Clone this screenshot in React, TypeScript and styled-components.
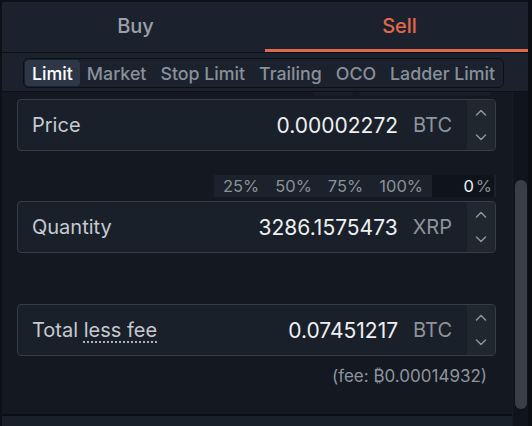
import React from "react";
import styled, { createGlobalStyle } from "styled-components";

const Global = createGlobalStyle`
  html, body { margin: 0; padding: 0; background: #131821; }
  body { font-family: Inter, "Noto Sans", "DejaVu Sans", sans-serif; }
  * { box-sizing: border-box; }
`;

const Panel = styled.div`
  width: 532px;
  height: 426px;
  display: flex;
  flex-direction: column;
  background: #131821;
  border-top: 2px solid #0d1117;
  border-left: 2px solid #0d1117;
  border-right: 4px solid #0b0e13;
  overflow: hidden;
`;

const Top = styled.div`
  background: #1b222d;
  border-bottom: 1px solid #0c1016;
`;

const SideTabs = styled.div`
  display: grid;
  grid-template-columns: 1fr 1fr;
  height: 51px;
  border-bottom: 1px solid #0c1016;
`;

const SideTab = styled.div<{ $active?: boolean }>`
  position: relative;
  display: flex;
  align-items: center;
  justify-content: center;
  padding-bottom: 3px;
  padding-left: ${(p) => (p.$active ? "6px" : "4px")};
  font-size: 20px;
  font-weight: 500;
  color: ${(p) => (p.$active ? "#e4674b" : "#9ba1a9")};
  &::after {
    content: "";
    display: ${(p) => (p.$active ? "block" : "none")};
    position: absolute;
    left: 0;
    right: 0;
    bottom: 0;
    height: 3px;
    background: #e0684b;
  }
`;

const TypeBar = styled.div`
  padding: 5px 0 3px 21px;
  height: 38px;
`;

const Segmented = styled.div`
  display: inline-flex;
  align-items: stretch;
  height: 30px;
  padding: 1px;
  border: 1px solid #0c1016;
  border-radius: 6px;
  background: #1b222d;
`;

const TypeItem = styled.div<{ $active?: boolean }>`
  display: flex;
  align-items: center;
  padding: 0 7px;
  border-radius: 4px;
  font-size: 17.8px;
  font-weight: 500;
  color: ${(p) => (p.$active ? "#ffffff" : "#899099")};
  background: ${(p) => (p.$active ? "#2e3747" : "transparent")};
`;

const Body = styled.div`
  flex: 1;
  display: flex;
  min-height: 0;
`;

const Content = styled.div`
  flex: 1;
  display: flex;
  flex-direction: column;
  min-width: 0;
`;

const Form = styled.div`
  flex: 1;
  display: flex;
  flex-direction: column;
  padding: 0 16px 0 15px;
`;

const PeekRow = styled.div`
  height: 4px;
  display: flex;
  justify-content: flex-end;
  gap: 6px;
  padding-right: 5px;
  margin-bottom: 3px;
`;

const PeekBlock = styled.div<{ $w: number }>`
  width: ${(p) => p.$w}px;
  background: #181e28;
  border-radius: 0 0 3px 3px;
`;

const Field = styled.div<{ $gap?: number }>`
  display: flex;
  align-items: stretch;
  height: 52px;
  margin-top: ${(p) => p.$gap ?? 0}px;
  border: 1px solid #353c47;
  border-radius: 4px;
  background: #1a2029;
  overflow: hidden;
`;

const Label = styled.div`
  flex: 1;
  display: flex;
  align-items: center;
  padding-left: 14px;
  font-size: 20px;
  color: #c6cad0;
`;

const Hint = styled.span`
  text-decoration: underline dotted #aeb3ba;
  text-underline-offset: 4px;
  text-decoration-thickness: 1.5px;
`;

const Value = styled.div`
  display: flex;
  align-items: center;
  font-size: 21px;
  color: #eef0f2;
`;

const Unit = styled.div`
  display: flex;
  align-items: center;
  margin: 0 15px 0 15px;
  font-size: 20px;
  color: #8e949c;
`;

const Spinner = styled.div`
  width: 28px;
  display: flex;
  flex-direction: column;
  background: #20272f;
`;

const SpinBtn = styled.div`
  flex: 1;
  display: flex;
  align-items: center;
  justify-content: center;
`;

const PercentRow = styled.div`
  align-self: flex-end;
  display: flex;
  align-items: stretch;
  height: 22px;
  margin-top: 24px;
  padding-left: 1px;
  background: #1b222b;
`;

const PercentItem = styled.div`
  display: flex;
  align-items: center;
  padding: 0 8px;
  font-size: 16.5px;
  color: #8b9199;
`;

const PercentInput = styled.div`
  width: 62px;
  margin: 0 2px 0 1px;
  display: flex;
  align-items: center;
  justify-content: flex-end;
  gap: 2px;
  padding-right: 2px;
  background: #0f141b;
  font-size: 16.5px;
`;

const PctNum = styled.span`
  color: #f1f2f4;
`;

const PctSign = styled.span`
  color: #8b9199;
`;

const Fee = styled.div`
  align-self: flex-end;
  margin-top: 10px;
  padding-right: 9px;
  font-size: 17px;
  line-height: 20px;
  color: #8e949c;
`;

const Footer = styled.div`
  height: 12px;
  border-top: 2px solid #0b0f14;
  background: #19202a;
`;

const Track = styled.div`
  width: 16px;
  display: flex;
  flex-direction: column;
  padding: 88px 1px 16px 2px;
  background: #10151c;
  border-left: 1px solid #161c25;
`;

const Thumb = styled.div`
  height: 229px;
  border-radius: 6px;
  background: #3a3f47;
`;

const Chevron = ({ up }: { up?: boolean }) => (
  <svg width="12" height="7" viewBox="0 0 12 7" fill="none">
    <path
      d={up ? "M1.5 6 L6 1.5 L10.5 6" : "M1.5 1 L6 5.5 L10.5 1"}
      stroke="#8e949c"
      strokeWidth="1.5"
      strokeLinecap="round"
      strokeLinejoin="round"
    />
  </svg>
);

const InputField = ({
  label,
  value,
  unit,
  gap,
}: {
  label: React.ReactNode;
  value: string;
  unit: string;
  gap?: number;
}) => (
  <Field $gap={gap}>
    <Label>{label}</Label>
    <Value>{value}</Value>
    <Unit>{unit}</Unit>
    <Spinner>
      <SpinBtn>
        <Chevron up />
      </SpinBtn>
      <SpinBtn>
        <Chevron />
      </SpinBtn>
    </Spinner>
  </Field>
);

const types = ["Limit", "Market", "Stop Limit", "Trailing", "OCO", "Ladder Limit"];

export default function App() {
  return (
    <>
      <Global />
      <Panel>
        <Top>
          <SideTabs>
            <SideTab>Buy</SideTab>
            <SideTab $active>Sell</SideTab>
          </SideTabs>
          <TypeBar>
            <Segmented>
              {types.map((t, i) => (
                <TypeItem key={t} $active={i === 0}>
                  {t}
                </TypeItem>
              ))}
            </Segmented>
          </TypeBar>
        </Top>
        <Body>
          <Content>
            <Form>
              <PeekRow>
                <PeekBlock $w={40} />
                <PeekBlock $w={132} />
              </PeekRow>
              <InputField label="Price" value="0.00002272" unit="BTC" />
              <PercentRow>
                <PercentItem>25%</PercentItem>
                <PercentItem>50%</PercentItem>
                <PercentItem>75%</PercentItem>
                <PercentItem>100%</PercentItem>
                <PercentInput>
                  <PctNum>0</PctNum>
                  <PctSign>%</PctSign>
                </PercentInput>
              </PercentRow>
              <InputField label="Quantity" value="3286.1575473" unit="XRP" gap={4} />
              <InputField
                label={
                  <span>
                    Total <Hint>less fee</Hint>
                  </span>
                }
                value="0.07451217"
                unit="BTC"
                gap={51}
              />
              <Fee>(fee: ₿0.00014932)</Fee>
            </Form>
            <Footer />
          </Content>
          <Track>
            <Thumb />
          </Track>
        </Body>
      </Panel>
    </>
  );
}
